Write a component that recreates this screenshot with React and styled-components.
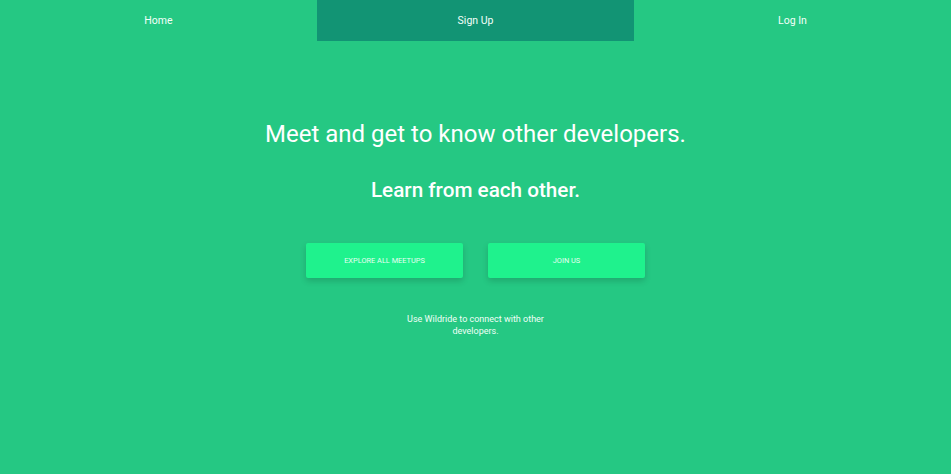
import React from "react";
import styled, { createGlobalStyle } from "styled-components";

const Global = createGlobalStyle`
  html, body { margin: 0; padding: 0; height: 100%; }
  body { background: #25c883; font-family: Roboto, "Liberation Sans", sans-serif; color: #fff; }
  #root { min-height: 100%; }
`;

const Page = styled.div`
  min-height: 474px;
  background: #25c883;
  display: flex;
  flex-direction: column;
`;

const Nav = styled.nav`
  display: grid;
  grid-template-columns: 317px 317px 1fr;
  height: 41px;
`;

const NavItem = styled.a`
  display: flex;
  align-items: center;
  justify-content: center;
  font-size: 10.5px;
  color: #f4fff9;
  text-decoration: none;
  background: ${(p) => (p.$active ? "#129474" : "transparent")};
`;

const Hero = styled.main`
  display: flex;
  flex-direction: column;
  align-items: center;
  padding-top: 78px;
`;

const Title = styled.h1`
  margin: 0;
  font-size: 24px;
  font-weight: 400;
  line-height: 30px;
  color: #fff;
`;

const Subtitle = styled.h2`
  margin: 29px 0 0;
  font-size: 20.7px;
  font-weight: 500;
  line-height: 24px;
  color: #fff;
`;

const Buttons = styled.div`
  display: flex;
  gap: 25px;
  margin-top: 41px;
`;

const Button = styled.button`
  width: 157px;
  height: 35px;
  border: none;
  border-radius: 2px;
  background: #1ff28d;
  color: #e6fff1;
  font-family: Roboto, "Liberation Sans", sans-serif;
  font-size: 7.4px;
  font-weight: 400;
  text-transform: uppercase;
  box-shadow: 0 3px 6px rgba(0, 0, 0, 0.16);
  cursor: pointer;
`;

const Blurb = styled.p`
  margin: 35px 0 0;
  width: 150px;
  text-align: center;
  font-size: 9px;
  line-height: 12px;
  color: #f0fff7;
`;

export default function App() {
  return (
    <Page>
      <Global />
      <Nav>
        <NavItem href="#">Home</NavItem>
        <NavItem href="#" $active>Sign Up</NavItem>
        <NavItem href="#">Log In</NavItem>
      </Nav>
      <Hero>
        <Title>Meet and get to know other developers.</Title>
        <Subtitle>Learn from each other.</Subtitle>
        <Buttons>
          <Button>Explore all meetups</Button>
          <Button>Join us</Button>
        </Buttons>
        <Blurb>Use Wildride to connect with other developers.</Blurb>
      </Hero>
    </Page>
  );
}
